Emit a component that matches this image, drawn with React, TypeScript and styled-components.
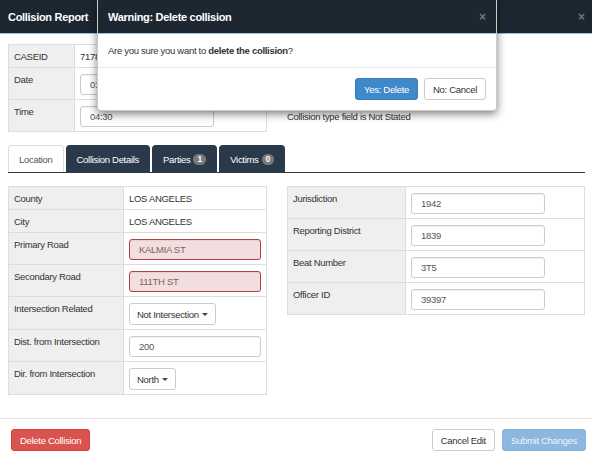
import styled, { createGlobalStyle } from "styled-components"

const GlobalStyle = createGlobalStyle`
  * {
    box-sizing: border-box;
  }

  body {
    margin: 0;
    background: #fff;
    color: #333;
    font-family: "Liberation Sans", Arial, sans-serif;
    font-size: 9.5px;
    letter-spacing: -0.3px;
  }
`

const Page = styled.div`
  position: relative;
  width: 592px;
  height: 460px;
  overflow: hidden;
`

const TopBar = styled.div`
  display: flex;
  align-items: center;
  justify-content: space-between;
  height: 34px;
  padding: 0 7px 0 8px;
  background: #1c2631;
  border-bottom: 1px solid #9dbfe0;
`

const BarTitle = styled.h1`
  margin: 0;
  color: #fff;
  font-size: 11px;
  font-weight: bold;
  letter-spacing: -0.3px;
`

const CloseButton = styled.span`
  color: #6f767f;
  font-size: 12px;
  font-weight: bold;
  line-height: 1;
  letter-spacing: 0;
  cursor: pointer;
`

const Content = styled.div`
  padding: 10px 7px 0 8px;
`

const Row = styled.div<{ $gap?: number }>`
  display: flex;
  align-items: flex-start;
  gap: ${(p) => p.$gap ?? 20}px;
`

const Notes = styled.div`
  padding-top: 66px;
  line-height: 13px;
  color: #333;
`

const FieldTable = styled.table<{ $width: number; $labelWidth: number }>`
  width: ${(p) => p.$width}px;
  table-layout: fixed;
  border-collapse: collapse;

  td {
    border: 1px solid #ddd;
    padding: 5px 5px 4px;
    line-height: 13px;
    vertical-align: top;
  }

  td:first-child {
    width: ${(p) => p.$labelWidth}px;
    background: #efefef;
    color: #333;
  }

  td:last-child {
    background: #fff;
  }
`

const TextInput = styled.div<{ $width?: number; $error?: boolean }>`
  display: flex;
  align-items: center;
  width: ${(p) => (p.$width ? `${p.$width}px` : "100%")};
  height: 21px;
  margin-top: 1px;
  padding: 0 9px;
  border: 1px solid ${(p) => (p.$error ? "#a94442" : "#ccc")};
  border-radius: 3px;
  background: ${(p) => (p.$error ? "#f2dede" : "#fff")};
  color: ${(p) => (p.$error ? "#7d6262" : "#555")};
  box-shadow: inset 0 1px 1px rgba(0, 0, 0, 0.06);
  white-space: nowrap;
  overflow: hidden;
`

const Dropdown = styled.div`
  display: inline-flex;
  align-items: center;
  height: 22px;
  margin-top: 1px;
  padding: 0 7px;
  border: 1px solid #ccc;
  border-radius: 3px;
  background: #fff;
  color: #333;
`

const Caret = styled.span`
  display: inline-block;
  width: 0;
  height: 0;
  margin-left: 3px;
  border-top: 3px solid #444;
  border-left: 3px solid transparent;
  border-right: 3px solid transparent;
`

const TabBar = styled.div`
  display: flex;
  gap: 2px;
  margin-top: 13px;
  border-bottom: 1px solid #2a3a4b;
`

const Tab = styled.div<{ $active?: boolean }>`
  display: flex;
  align-items: center;
  height: 27px;
  padding: 0 10px;
  border-radius: 4px 4px 0 0;
  border: 1px solid ${(p) => (p.$active ? "#ddd" : "#2a3a4b")};
  border-bottom: none;
  background: ${(p) => (p.$active ? "#fff" : "#2a3a4b")};
  color: ${(p) => (p.$active ? "#555" : "#fff")};
  cursor: pointer;
`

const Badge = styled.span`
  display: inline-block;
  margin-left: 3px;
  padding: 1px 4px;
  border-radius: 7px;
  background: #7a7a7a;
  color: #fff;
  font-size: 8.5px;
  font-weight: bold;
  line-height: 9px;
  letter-spacing: 0;
`

const Fields = styled(Row)`
  margin-top: 13px;
`

const Footer = styled.div`
  display: flex;
  align-items: center;
  justify-content: space-between;
  margin-top: 23px;
  padding: 10px 6px 0 11px;
  border-top: 1px solid #e3e3e3;
`

const ButtonGroup = styled.div`
  display: flex;
  gap: 7px;
`

type Variant = "danger" | "default" | "primary" | "disabled"

const variants: Record<Variant, { bg: string; border: string; color: string }> = {
  danger: { bg: "#d9534f", border: "#d43f3a", color: "#fff" },
  default: { bg: "#fff", border: "#ccc", color: "#333" },
  primary: { bg: "#3f88c9", border: "#357ebd", color: "#fff" },
  disabled: { bg: "#8db7df", border: "#84b0da", color: "#eef4fa" },
}

const Button = styled.button<{ $variant: Variant }>`
  height: 22px;
  padding: 0 8px;
  border: 1px solid ${(p) => variants[p.$variant].border};
  border-radius: 3px;
  background: ${(p) => variants[p.$variant].bg};
  color: ${(p) => variants[p.$variant].color};
  font-family: inherit;
  font-size: 9.5px;
  letter-spacing: -0.3px;
  cursor: ${(p) => (p.$variant === "disabled" ? "not-allowed" : "pointer")};
`

const Modal = styled.div`
  position: absolute;
  top: 0;
  left: 97px;
  width: 400px;
  background: #fff;
  border: 1px solid rgba(0, 0, 0, 0.2);
  border-top: none;
  border-radius: 0 0 4px 4px;
  box-shadow: 0 3px 9px rgba(0, 0, 0, 0.5);
`

const ModalHeader = styled(TopBar)`
  padding: 0 10px 0 10px;
  background: #1d2732;
`

const ModalBody = styled.div`
  padding: 10px 10px;
  line-height: 13px;

  b {
    font-weight: bold;
  }
`

const ModalFooter = styled.div`
  display: flex;
  justify-content: flex-end;
  gap: 6px;
  padding: 10px;
  border-top: 1px solid #e5e5e5;
`

export default function App() {
  return (
    <Page>
      <GlobalStyle />
      <TopBar>
        <BarTitle>Collision Report</BarTitle>
        <CloseButton>×</CloseButton>
      </TopBar>

      <Content>
        <Row>
          <FieldTable $width={259} $labelWidth={66}>
            <tbody>
              <tr>
                <td>CASEID</td>
                <td>7178302</td>
              </tr>
              <tr>
                <td>Date</td>
                <td>
                  <TextInput $width={134}>01/14/2016</TextInput>
                </td>
              </tr>
              <tr>
                <td>Time</td>
                <td>
                  <TextInput $width={134}>04:30</TextInput>
                </td>
              </tr>
            </tbody>
          </FieldTable>
          <Notes>Collision type field is Not Stated</Notes>
        </Row>

        <TabBar>
          <Tab $active>Location</Tab>
          <Tab>Collision Details</Tab>
          <Tab>
            Parties<Badge>1</Badge>
          </Tab>
          <Tab>
            Victims<Badge>0</Badge>
          </Tab>
        </TabBar>

        <Fields>
          <FieldTable $width={259} $labelWidth={115}>
            <tbody>
              <tr>
                <td>County</td>
                <td>LOS ANGELES</td>
              </tr>
              <tr>
                <td>City</td>
                <td>LOS ANGELES</td>
              </tr>
              <tr>
                <td>Primary Road</td>
                <td>
                  <TextInput $error>KALMIA ST</TextInput>
                </td>
              </tr>
              <tr>
                <td>Secondary Road</td>
                <td>
                  <TextInput $error>111TH ST</TextInput>
                </td>
              </tr>
              <tr>
                <td>Intersection Related</td>
                <td>
                  <Dropdown>
                    Not Intersection<Caret />
                  </Dropdown>
                </td>
              </tr>
              <tr>
                <td>Dist. from Intersection</td>
                <td>
                  <TextInput>200</TextInput>
                </td>
              </tr>
              <tr>
                <td>Dir. from Intersection</td>
                <td>
                  <Dropdown>
                    North<Caret />
                  </Dropdown>
                </td>
              </tr>
            </tbody>
          </FieldTable>

          <FieldTable $width={298} $labelWidth={118}>
            <tbody>
              <tr>
                <td>Jurisdiction</td>
                <td>
                  <TextInput $width={134}>1942</TextInput>
                </td>
              </tr>
              <tr>
                <td>Reporting District</td>
                <td>
                  <TextInput $width={134}>1839</TextInput>
                </td>
              </tr>
              <tr>
                <td>Beat Number</td>
                <td>
                  <TextInput $width={134}>3T5</TextInput>
                </td>
              </tr>
              <tr>
                <td>Officer ID</td>
                <td>
                  <TextInput $width={134}>39397</TextInput>
                </td>
              </tr>
            </tbody>
          </FieldTable>
        </Fields>
      </Content>

      <Footer>
        <Button $variant="danger">Delete Collision</Button>
        <ButtonGroup>
          <Button $variant="default">Cancel Edit</Button>
          <Button $variant="disabled">Submit Changes</Button>
        </ButtonGroup>
      </Footer>

      <Modal>
        <ModalHeader>
          <BarTitle>Warning: Delete collision</BarTitle>
          <CloseButton>×</CloseButton>
        </ModalHeader>
        <ModalBody>
          Are you sure you want to <b>delete the collision</b>?
        </ModalBody>
        <ModalFooter>
          <Button $variant="primary">Yes: Delete</Button>
          <Button $variant="default">No: Cancel</Button>
        </ModalFooter>
      </Modal>
    </Page>
  )
}
